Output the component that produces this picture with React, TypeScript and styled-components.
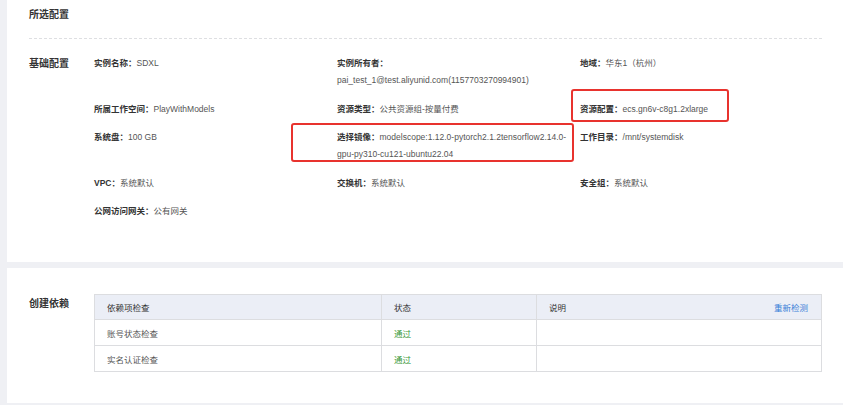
import styled, { createGlobalStyle } from "styled-components";

const GlobalStyle = createGlobalStyle`
  html, body {
    margin: 0;
    padding: 0;
    background: #eff0f4;
  }
  body {
    font-family: "Liberation Sans", "Noto Sans CJK SC", sans-serif;
    -webkit-font-smoothing: antialiased;
  }
`;

const Page = styled.div`
  width: 843px;
  height: 405px;
  padding-left: 7px;
  box-sizing: border-box;
  overflow: hidden;
  display: flex;
  flex-direction: column;
  gap: 6px;
`;

const Card = styled.section<{ $height: number }>`
  position: relative;
  background: #ffffff;
  height: ${(p) => p.$height}px;
  box-sizing: border-box;
  padding: 0 21px 0 22px;
`;

const Title = styled.h2`
  margin: 0;
  padding-top: 6px;
  font-size: 10px;
  line-height: 17px;
  font-weight: 600;
  color: #333;
`;

const Divider = styled.hr`
  margin: 15px 0 16px;
  border: none;
  border-top: 1px dashed #dedfe2;
`;

const Section = styled.div<{ $top?: number }>`
  display: flex;
  align-items: flex-start;
  padding-top: ${(p) => p.$top ?? 0}px;
`;

const SectionLabel = styled.div<{ $offset?: number }>`
  width: 65px;
  flex-shrink: 0;
  padding-top: ${(p) => p.$offset ?? 0}px;
  font-size: 10px;
  line-height: 17px;
  font-weight: 600;
  color: #333;
`;

const Grid = styled.div`
  display: grid;
  grid-template-columns: repeat(3, 243px);
  row-gap: 11.5px;
`;

const Item = styled.div`
  font-size: 8.5px;
  line-height: 17px;
  color: #555;
`;

const Line = styled.div`
  white-space: nowrap;
`;

const Key = styled.span`
  font-weight: 600;
  color: #333;
`;

const Highlight = styled.div<{ $x: number; $y: number; $w: number; $h: number }>`
  position: absolute;
  left: ${(p) => p.$x}px;
  top: ${(p) => p.$y}px;
  width: ${(p) => p.$w}px;
  height: ${(p) => p.$h}px;
  box-sizing: border-box;
  border: 2px solid #e8332e;
  border-radius: 3px;
  pointer-events: none;
`;

const Table = styled.div`
  flex: 1;
  border: 1px solid #dcdde0;
  border-bottom: none;
  font-size: 8.5px;
`;

const Row = styled.div<{ $head?: boolean }>`
  display: grid;
  grid-template-columns: 286px 155px 1fr;
  height: ${(p) => (p.$head ? 24 : 25)}px;
  background: ${(p) => (p.$head ? "#ebeef6" : "#fff")};
  border-bottom: 1px solid #dcdde0;
`;

const Cell = styled.div<{ $tone?: "ok" }>`
  display: flex;
  align-items: center;
  justify-content: space-between;
  padding: 0 13px 0 12px;
  color: ${(p) => (p.$tone === "ok" ? "#3c9a3a" : "#555")};
  & + & {
    border-left: 1px solid #dcdde0;
  }
`;

const HeadText = styled.span`
  color: #333;
`;

const LinkButton = styled.a`
  color: #3a80d8;
  cursor: pointer;
`;

type Info = { label: string; lines: string[] };

const rows: Info[] = [
  { label: "实例名称：", lines: ["SDXL"] },
  { label: "实例所有者：", lines: ["", "pai_test_1@test.aliyunid.com(1157703270994901)"] },
  { label: "地域：", lines: ["华东1（杭州）"] },
  { label: "所属工作空间：", lines: ["PlayWithModels"] },
  { label: "资源类型：", lines: ["公共资源组-按量付费"] },
  { label: "资源配置：", lines: ["ecs.gn6v-c8g1.2xlarge"] },
  { label: "系统盘：", lines: ["100 GB"] },
  {
    label: "选择镜像：",
    lines: ["modelscope:1.12.0-pytorch2.1.2tensorflow2.14.0-", "gpu-py310-cu121-ubuntu22.04"],
  },
  { label: "工作目录：", lines: ["/mnt/systemdisk"] },
  { label: "VPC：", lines: ["系统默认"] },
  { label: "交换机：", lines: ["系统默认"] },
  { label: "安全组：", lines: ["系统默认"] },
  { label: "公网访问网关：", lines: ["公有网关"] },
];

const checks = [
  { name: "账号状态检查", status: "通过" },
  { name: "实名认证检查", status: "通过" },
];

const InfoItem = ({ label, lines }: Info) => (
  <Item>
    {lines.map((text, i) => (
      <Line key={i}>
        {i === 0 && <Key>{label}</Key>}
        {text}
      </Line>
    ))}
  </Item>
);

export default function App() {
  return (
    <>
      <GlobalStyle />
      <Page>
        <Card $height={262}>
          <Title>所选配置</Title>
          <Divider />
          <Section>
            <SectionLabel>基础配置</SectionLabel>
            <Grid>
              {rows.map((r) => (
                <InfoItem key={r.label} label={r.label} lines={r.lines} />
              ))}
            </Grid>
          </Section>
          <Highlight $x={564} $y={89} $w={158} $h={33} />
          <Highlight $x={284} $y={123} $w={283} $h={39} />
        </Card>
        <Card $height={135}>
          <Section $top={26}>
            <SectionLabel $offset={1}>创建依赖</SectionLabel>
            <Table>
              <Row $head>
                <Cell>
                  <HeadText>依赖项检查</HeadText>
                </Cell>
                <Cell>
                  <HeadText>状态</HeadText>
                </Cell>
                <Cell>
                  <HeadText>说明</HeadText>
                  <LinkButton>重新检测</LinkButton>
                </Cell>
              </Row>
              {checks.map((c) => (
                <Row key={c.name}>
                  <Cell>{c.name}</Cell>
                  <Cell $tone="ok">{c.status}</Cell>
                  <Cell />
                </Row>
              ))}
            </Table>
          </Section>
        </Card>
      </Page>
    </>
  );
}
